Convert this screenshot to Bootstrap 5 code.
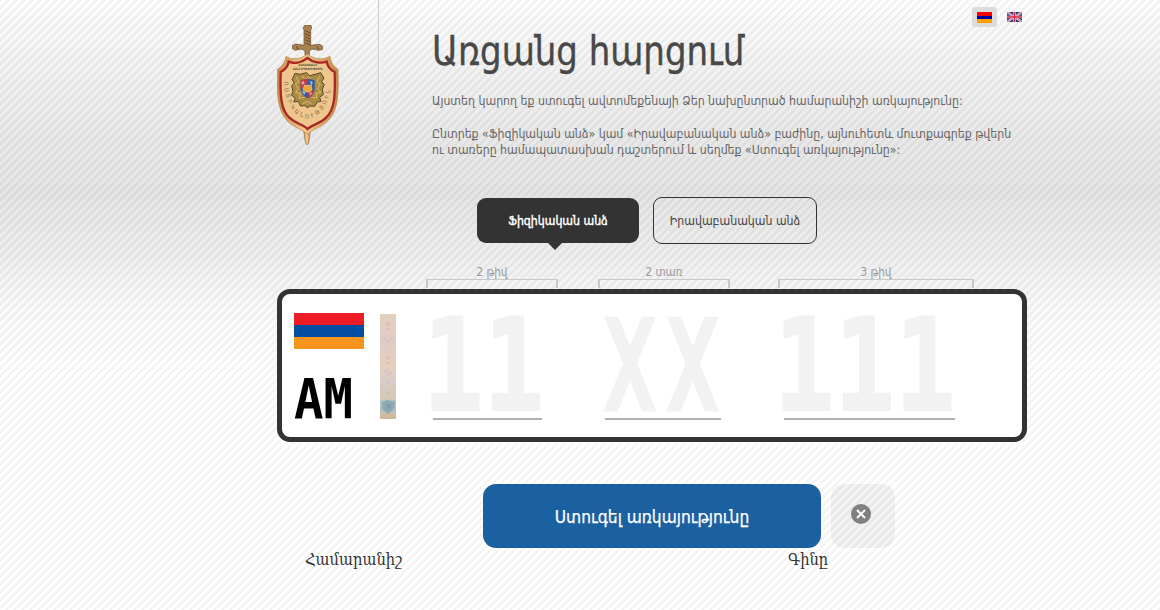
<!DOCTYPE html>
<html lang="hy">
<head>
<meta charset="utf-8">
<meta name="viewport" content="width=device-width, initial-scale=1">
<title>Առցանց հարցում</title>
<link href="https://cdn.jsdelivr.net/npm/bootstrap@5.3.0/dist/css/bootstrap.min.css" rel="stylesheet">
<style>
html{overflow:hidden}
body{font-family:"DejaVu Sans Condensed","DejaVu Sans",sans-serif;font-stretch:condensed;color:#666;height:610px;overflow:hidden;
background:linear-gradient(135deg,rgba(0,0,0,.05) 6%,transparent 16% 40%,rgba(0,0,0,.05) 48% 55%,transparent 65% 90%,rgba(0,0,0,.05)),
linear-gradient(#fdfdfd 0,#f1f1f1 70px,#e8e8e8 140px,#e4e4e4 195px,#ededed 255px,#f9f9f9 310px,#fff 380px);background-size:8px 8px,auto}
.page{width:750px;margin-left:277px}
.head{height:197px}
.logo-col{width:102px;height:145px;padding-top:25px;border-right:1px solid #c8c8c8;box-shadow:1px 0 #fafafa}
.intro{padding-left:53px;padding-top:29px;white-space:nowrap}
.fit{display:inline-block;transform-origin:0 50%;white-space:nowrap}
h1{font-size:40px;line-height:44px;color:#484848;font-weight:400;height:64px;margin:0}
.t1{transform:scaleX(.945);-webkit-text-stroke:.35px #484848}
.intro p{font-size:13px;line-height:16px;margin:0 0 17px}
.intro p .fit{transform:scaleX(.939);height:16px;vertical-align:top}
.langs{top:7px;right:1px}
.lang{width:25px;height:20px;border-radius:3px}
.lang.on{background:#dcdcdc}
.tabs{padding-left:200px;gap:14px}
.tab{width:162px;height:45px;border-radius:9px;margin-top:1px;font-size:12px;color:#fff;background:#333}
.tab.on::after{content:"";position:absolute;left:70px;top:44px;border:8px solid transparent;border-top-color:#333;border-bottom:0}
.tab span{font-size:12.2px;padding-top:1px}
.tab.on span{-webkit-text-stroke:.4px #fff}
.tab.off{width:164px;height:47px;margin-top:0;background:none;border:1px solid #333;color:#444}
.marks{height:45px;padding-top:20px;font-size:11.6px;line-height:16px;color:#999;margin-left:149px;text-align:center}
.mk i{display:block;height:9px;border:2px solid #c9c9c9;border-top-width:1px;border-bottom:0;margin-top:-1px}
.plate{height:153px;border:5px solid #333;border-radius:13px;background:#fff}
.state{padding:19px 0 0 12px;width:98px}
.stamp{margin-top:20px;width:16px;height:105px}
.slot{margin-top:14px;height:112px;border-bottom:2px solid #b0b0b0;font:700 128px/115px "DejaVu Sans Mono",monospace;color:#f2f2f2;white-space:nowrap}
.n{transform:scaleX(.785);margin-left:-10px;-webkit-text-stroke:2px #f2f2f2}
.x{transform:scaleX(.7);margin-left:-2px;letter-spacing:12.5px;line-height:117px;-webkit-text-stroke:1px #f2f2f2}
.am{font:700 55px/50px "DejaVu Sans Mono",monospace;color:#000;margin-top:25px}
.am .fit{transform:scaleX(.89)}
.acts{padding:42px 0 0 206px;gap:10px}
.go{width:338px;height:64px;border-radius:13px;background:#1b60a0;color:#fff;font-size:17.2px;padding-top:4px;-webkit-text-stroke:.25px #fff}
.clr{width:64px;height:64px;border-radius:13px;background:rgba(0,0,0,.05);padding:0 10px 5px 6px}
.cols{font:16px/24px "DejaVu Serif",serif;color:#333;padding-left:28px}
.cols .fit{transform:scaleX(.92)}
</style>
</head>
<body>
<main class="page position-relative">
<div class="langs position-absolute d-flex gap-1">
<a class="lang on d-flex align-items-center justify-content-center" href="#"><svg width="15" height="11"><path fill="#f00" d="M0 0h15v4H0z"/><path fill="#0000a0" d="M0 4h15v3H0z"/><path fill="#ffa000" d="M0 7h15v4H0z"/></svg></a>
<a class="lang d-flex align-items-center justify-content-center" href="#"><svg style="margin-left:2px" width="15" height="10" viewBox="0 0 15 10"><path fill="#27397f" d="M0 0h15v10H0z"/><path stroke="#e8e8f2" stroke-width="2" d="M0 0l15 10M15 0L0 10"/><path stroke="#cf4358" stroke-width=".8" d="M0 0l15 10M15 0L0 10"/><path stroke="#e9d9e6" stroke-width="2.6" d="M7.5 0v10M0 5h15"/><path stroke="#d0243c" stroke-width="1.4" d="M7.5 0v10M0 5h15"/></svg></a>
</div>
<header class="head d-flex">
<div class="logo-col flex-shrink-0">
<svg class="d-block" width="62" height="120" viewBox="36 30 186 360">
<defs><linearGradient id="gold"><stop offset="0" stop-color="#c98b4c"/><stop offset=".45" stop-color="#f2ca8b"/><stop offset="1" stop-color="#c58a50"/></linearGradient>
<path id="arc" d="M56 200C60 270 91 306 127 311C166 306 195 268 200 200"/></defs>
<path fill="url(#gold)" stroke="#8b673c" stroke-width="2" d="M115 340h22l-6 45-5 5-5-10z"/>
<path fill="#a98251" stroke="#654522" stroke-width="2" d="M119 31h19l2 9-3 5v46l27-3 9 6-1 10-10 2-21-4-8 6v13h-13v-13l-10-6-19 4-9-5 1-10 9-4 25 4V45l-3-5z"/>
<path stroke="#5d4022" stroke-width="3" d="M121 47l14 7m-14 2l14 7m-14 2l14 7m-14 2l14 7m-14 2l14 7M94 95l5 7m57-7l5 7"/>
<path fill="url(#gold)" stroke="#bd8448" stroke-width="2" d="M127 117C108 134 77 135 63 124C61 143 49 156 37 163C35 236 37 284 66 317C89 341 114 342 127 358C145 342 170 337 191 315C221 284 221 231 219 163C207 155 197 143 195 124C174 137 145 132 127 117Z"/>
<path fill="#efc68d" stroke="#a92725" stroke-width="7" d="M127 129C108 145 86 146 71 140C69 155 59 165 47 171C45 242 47 284 73 308C94 328 115 328 127 342C143 328 166 326 184 307C210 283 211 238 209 171C197 165 187 155 185 140C168 146 144 143 127 129Z"/>
<g fill="#51452d" font-family="DejaVu Sans" font-weight="700" font-size="9"><text x="100" y="153" textLength="56">ՀԱՅԱՍՏԱՆԻ</text><text x="83" y="164" textLength="91">ՀԱՆՐԱՊԵՏՈՒԹՅՈՒՆ</text></g>
<text font-family="DejaVu Sans" font-size="18" fill="#80694a" textLength="262"><textPath href="#arc">ՈՍՏԻԿԱՆՈՒԹՅՈՒՆ</textPath></text>
<path fill="#a98b43" stroke="#574a25" stroke-width="3" d="M124 173l-19 5-15-3-9 19 7 10-8 8 4 18-5 10 12 9-5 12 14-2 6 14 15-1 6 7 8-6 14 1 8-13 11-2-4-12 11-8-3-17 6-13-8-9 7-11-10-16-17 5-16 4z"/>
<path fill="none" stroke="#e0bb6d" stroke-width="3" d="M93 185l9 15-11 7 9 13-8 13 15 2-5 15 17-3m45-63l-8 16 10 7-8 13 9 12-15 4 4 13-16-2M112 183l8 12 10-9 9 8m-26 73l14-8 13 8"/>
<path fill="#325d9f" d="M107 196q21-9 42 0v29q-7 21-21 25-16-7-21-26z"/><path fill="#c93643" d="M107 223v-27q9-5 20-5v14l-18 18zm23 4h18q-5 16-18 22z"/><path fill="#e6a3a2" d="M109 202l7-5 3 8-8 5zm25 29l8 2-7 10z"/><path fill="#a9bfdf" d="M134 198l9 3-3 12zm-24 30l11 3-3 9z"/><path fill="#f1a32e" stroke="#ead4aa" stroke-width="2" d="M118 211h20l3 14-9 6h-9l-9-6z"/>
</svg>
</div>
<div class="intro">
<h1><span class="fit t1">Առցանց հարցում</span></h1>
<p><span class="fit">Այստեղ կարող եք ստուգել ավտոմեքենայի Ձեր նախընտրած համարանիշի առկայությունը:</span></p>
<p><span class="fit">Ընտրեք «Ֆիզիկական անձ» կամ «Իրավաբանական անձ» բաժինը, այնուհետև մուտքագրեք թվերն</span><br><span class="fit">ու տառերը համապատասխան դաշտերում և սեղմեք «Ստուգել առկայությունը»:</span></p>
</div>
</header>
<nav class="tabs d-flex">
<a class="tab on position-relative d-flex align-items-center justify-content-center text-decoration-none" href="#"><span>Ֆիզիկական անձ</span></a>
<a class="tab off d-flex align-items-center justify-content-center text-decoration-none" href="#"><span>Իրավաբանական անձ</span></a>
</nav>
<div class="marks d-flex">
<div class="mk" style="width:132px">2 թիվ<i></i></div>
<div class="mk" style="width:132px;margin-left:40px">2 տառ<i></i></div>
<div class="mk" style="width:196px;margin-left:48px">3 թիվ<i></i></div>
</div>
<section class="plate d-flex">
<div class="state flex-shrink-0"><svg class="d-block" width="70" height="36"><path fill="#ed1c24" d="M0 0h70v12H0z"/><path fill="#034ea2" d="M0 12h70v12H0z"/><path fill="#f7941e" d="M0 24h70v12H0z"/></svg>
<div class="am"><span class="fit">AM</span></div></div>
<svg class="stamp flex-shrink-0" viewBox="0 0 16 105"><defs><linearGradient id="holo" x2="0" y2="1"><stop offset="0" stop-color="#e3cfbd"/><stop offset=".25" stop-color="#e0cbc5"/><stop offset=".5" stop-color="#e4cfbd"/><stop offset=".65" stop-color="#d9cbc8"/><stop offset=".8" stop-color="#d4c9b5"/><stop offset="1" stop-color="#cbb99d"/></linearGradient></defs><path fill="url(#holo)" d="M0 0h16v105H0z"/><path fill="#b6c0bd" d="M0 86h16v13H0z"/><path fill="#8faab5" d="M2 88l6-2 7 2-1 7-6 5-6-5z"/><g fill="none" stroke="#d6b6b1"><path d="M6 10l2-2 2 2-2 2zM6 15h4M6 44l2-2 2 2-2 2zM6 49h4M6 79l2-2 2 2z"/><path stroke="#cbb7c8" d="M4 23l4 5 4-4M4 56l4 5 4-3M8 55v3M7 69h3"/><path stroke="#7895a5" d="M5 90l5 2-5 3m6-5l-3 6"/></g></svg>
<div class="slot" style="width:109px;margin-left:37px"><span class="fit n">11</span></div>
<div class="slot" style="width:116px;margin-left:63px"><span class="fit x">XX</span></div>
<div class="slot" style="width:171px;margin-left:63px"><span class="fit n">111</span></div>
</section>
<div class="acts d-flex">
<button class="go border-0"><span>Ստուգել առկայությունը</span></button>
<button class="clr border-0 d-flex align-items-center justify-content-center"><svg width="20" height="20"><circle cx="10" cy="10" r="10" fill="#808080"/><path d="M6 6l8 8M14 6l-8 8" stroke="#fff" stroke-width="2"/></svg></button>
</div>
<div class="cols d-flex"><div style="width:483px"><span class="fit">Համարանիշ</span></div><div><span class="fit">Գինը</span></div></div>
</main>
<script src="https://cdn.jsdelivr.net/npm/bootstrap@5.3.0/dist/js/bootstrap.bundle.min.js"></script>
</body>
</html>
